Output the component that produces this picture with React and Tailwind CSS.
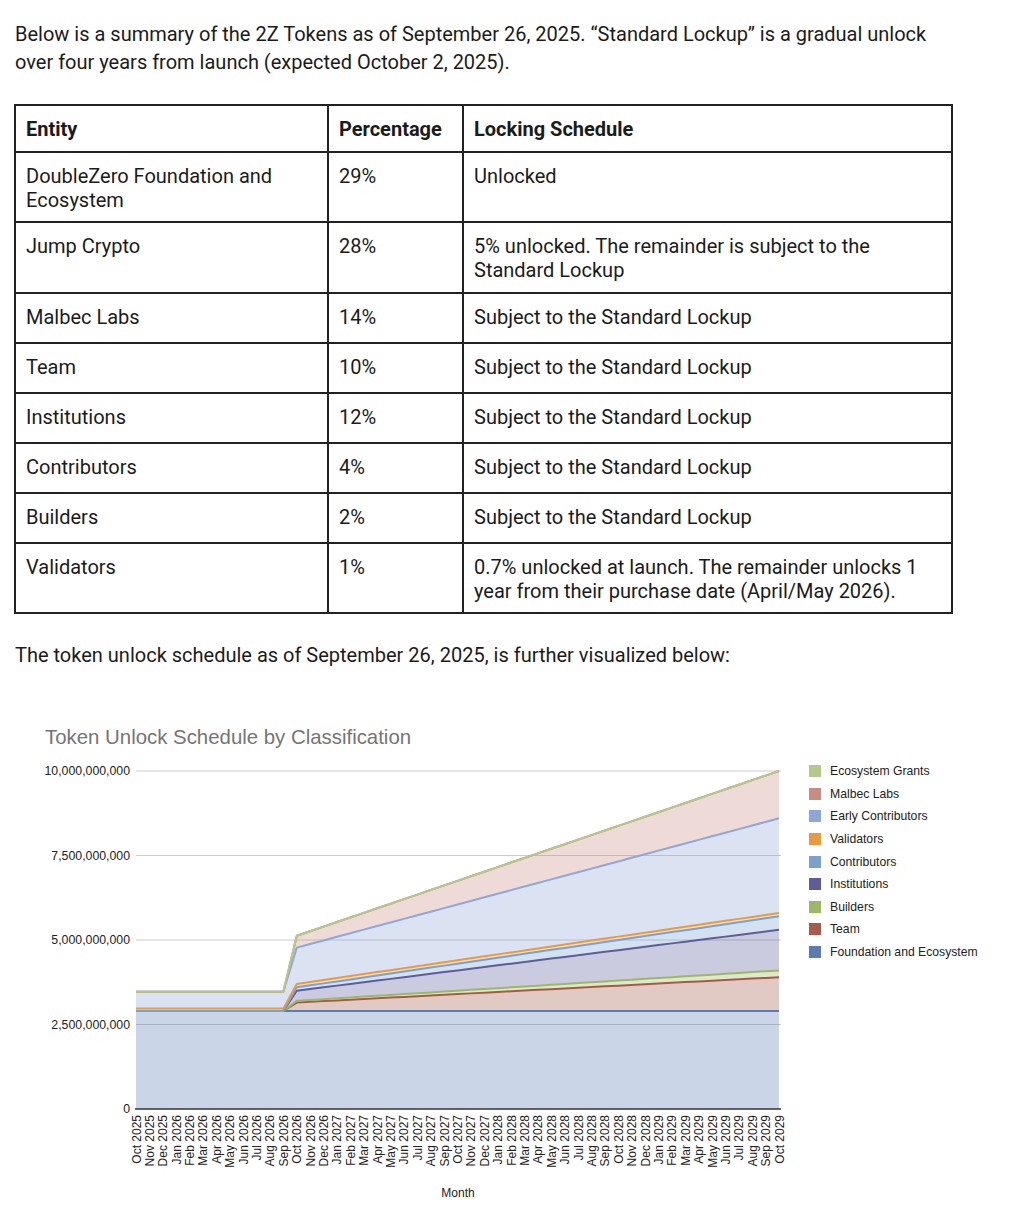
import React from 'react';

const rows = [
  { entity: 'DoubleZero Foundation and Ecosystem', pct: '29%', schedule: 'Unlocked', h: 'h-[70px]' },
  { entity: 'Jump Crypto', pct: '28%', schedule: '5% unlocked. The remainder is subject to the Standard Lockup', h: 'h-[71px]' },
  { entity: 'Malbec Labs', pct: '14%', schedule: 'Subject to the Standard Lockup', h: 'h-[50px]' },
  { entity: 'Team', pct: '10%', schedule: 'Subject to the Standard Lockup', h: 'h-[50px]' },
  { entity: 'Institutions', pct: '12%', schedule: 'Subject to the Standard Lockup', h: 'h-[50px]' },
  { entity: 'Contributors', pct: '4%', schedule: 'Subject to the Standard Lockup', h: 'h-[50px]' },
  { entity: 'Builders', pct: '2%', schedule: 'Subject to the Standard Lockup', h: 'h-[50px]' },
  { entity: 'Validators', pct: '1%', schedule: '0.7% unlocked at launch. The remainder unlocks 1 year from their purchase date (April/May 2026).', h: 'h-[70px]' },
];

// stack order, bottom first (values in billions)
const series = [
  { name: 'Foundation and Ecosystem', color: '#5b7bb5', val: () => 2.9 },
  { name: 'Team', color: '#a65a48', val: (i) => (i < 12 ? 0 : (1.0 * i) / 48) },
  { name: 'Builders', color: '#9db865', val: (i) => (i < 12 ? 0 : (0.2 * i) / 48) },
  { name: 'Institutions', color: '#5e5c9a', val: (i) => (i < 12 ? 0 : (1.2 * i) / 48) },
  { name: 'Contributors', color: '#79a2cf', val: (i) => (i < 12 ? 0 : (0.4 * i) / 48) },
  { name: 'Validators', color: '#e89b3e', val: (i) => (i < 12 ? 0.07 : 0.1) },
  { name: 'Early Contributors', color: '#8ea7d6', val: (i) => 0.5 + (i < 12 ? 0 : (2.3 * i) / 48) },
  { name: 'Malbec Labs', color: '#c98b82', val: (i) => (i < 12 ? 0 : (1.4 * i) / 48) },
  { name: 'Ecosystem Grants', color: '#b5c88c', val: () => 0 },
];

const MONTHS = ['Jan', 'Feb', 'Mar', 'Apr', 'May', 'Jun', 'Jul', 'Aug', 'Sep', 'Oct', 'Nov', 'Dec'];
const N = 49;
const X = (i) => 136 + (i * 643) / 48;
const Y = (v) => 360 - v * 33.8;

const Chart = () => {
  const idx = Array.from({ length: N }, (_, i) => i);
  // cumulative stacks
  const cum = [];
  series.forEach((s, k) => {
    cum.push(idx.map((i) => (k === 0 ? 0 : cum[k - 1][i]) + s.val(i)));
  });

  const bands = series.map((s, k) => {
    const top = idx.map((i) => `${X(i)},${Y(cum[k][i])}`);
    const bottom = idx
      .slice()
      .reverse()
      .map((i) => `${X(i)},${Y(k === 0 ? 0 : cum[k - 1][i])}`);
    return <polygon key={s.name} points={[...top, ...bottom].join(' ')} fill={s.color} fillOpacity="0.32" />;
  });

  const lines = series.map((s, k) => (
    <polyline
      key={s.name}
      points={idx.map((i) => `${X(i)},${Y(cum[k][i])}`).join(' ')}
      fill="none"
      stroke={s.color}
      strokeWidth="2"
      strokeLinejoin="round"
    />
  ));

  const ticks = [
    { v: 10, label: '10,000,000,000' },
    { v: 7.5, label: '7,500,000,000' },
    { v: 5, label: '5,000,000,000' },
    { v: 2.5, label: '2,500,000,000' },
    { v: 0, label: '0' },
  ];

  return (
    <svg width="800" height="462" className="block" style={{ fontFamily: '"Liberation Sans", Arial, sans-serif' }}>
      {ticks.map((t) => (
        <g key={t.label}>
          {t.v > 0 && <line x1="136" x2="781" y1={Y(t.v)} y2={Y(t.v)} stroke="#cccccc" strokeWidth="1" />}
          <text x="130" y={Y(t.v) + 4} textAnchor="end" fontSize="12.3" fill="#222">
            {t.label}
          </text>
        </g>
      ))}
      {bands}
      {lines}
      <line x1="135" x2="781" y1={Y(0)} y2={Y(0)} stroke="#333" strokeWidth="1.5" />
      {idx.map((i) => {
        const m = (9 + i) % 12;
        const yr = 2025 + Math.floor((9 + i) / 12);
        return (
          <text
            key={i}
            transform={`translate(${X(i) + 4.5}, 366) rotate(-90)`}
            textAnchor="end"
            fontSize="12"
            fill="#222"
          >
            {`${MONTHS[m]} ${yr}`}
          </text>
        );
      })}
      <text x="458" y="448" textAnchor="middle" fontSize="12" fill="#222">
        Month
      </text>
    </svg>
  );
};

const Legend = () => (
  <div className="pt-[35px] pl-[9px] text-[12.2px] text-[#222]" style={{ fontFamily: '"Liberation Sans", Arial, sans-serif' }}>
    {series
      .slice()
      .reverse()
      .map((s) => (
        <div key={s.name} className="flex items-center h-[22.6px] gap-[9px]">
          <span className="w-[12px] h-[12px] shrink-0" style={{ backgroundColor: s.color }} />
          <span>{s.name}</span>
        </div>
      ))}
  </div>
);

export default function App() {
  return (
    <div className="w-[1018px] min-h-[1222px] bg-white text-[#1b1b1b]" style={{ fontFamily: 'Roboto, "Noto Sans", sans-serif' }}>
      <p className="pt-[20px] pl-[15px] pr-[60px] text-[20px] leading-[28px]">
        Below is a summary of the 2Z Tokens as of September 26, 2025. “Standard Lockup” is a gradual unlock over four years from launch (expected October 2, 2025).
      </p>

      {/* Tabla de asignaciones */}
      <div className="mt-[28px] ml-[14px] w-[939px] grid grid-cols-[313px_135px_489px] border-l-2 border-t-2 border-[#222] text-[20px] leading-[24px]">
        {['Entity', 'Percentage', 'Locking Schedule'].map((h) => (
          <div key={h} className="h-[47px] pt-[11px] pl-[10px] pr-[10px] font-bold border-r-2 border-b-2 border-[#222]">
            {h}
          </div>
        ))}
        {rows.map((r) => (
          <React.Fragment key={r.entity}>
            <div className={`${r.h} pt-[11px] pl-[10px] pr-[30px] border-r-2 border-b-2 border-[#222]`}>{r.entity}</div>
            <div className={`${r.h} pt-[11px] pl-[10px] pr-[10px] border-r-2 border-b-2 border-[#222]`}>{r.pct}</div>
            <div className={`${r.h} pt-[11px] pl-[10px] pr-[10px] border-r-2 border-b-2 border-[#222]`}>{r.schedule}</div>
          </React.Fragment>
        ))}
      </div>

      <p className="mt-[27px] pl-[15px] text-[20px] leading-[28px]">
        The token unlock schedule as of September 26, 2025, is further visualized below:
      </p>

      {/* Gráfico */}
      <div className="mt-[56px] flex">
        <div className="w-[800px]">
          <div className="pl-[45px] h-[24px] leading-[24px] text-[20.4px] text-[#757575]" style={{ fontFamily: '"Liberation Sans", Arial, sans-serif' }}>
            Token Unlock Schedule by Classification
          </div>
          <Chart />
        </div>
        <Legend />
      </div>
    </div>
  );
}
